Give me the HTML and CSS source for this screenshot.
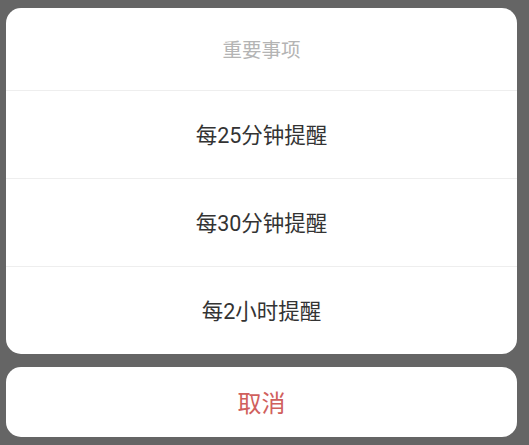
FILE: index.html
```html
<!DOCTYPE html>
<html lang="zh-CN">
<head>
    <meta charset="UTF-8">
    <meta name="viewport" content="width=device-width, initial-scale=1.0">
    <title>提醒</title>
    <link rel="stylesheet" href="styles.css">
</head>
<body>
    <div class="sheet">
        <div class="sheet-group">
            <div class="sheet-title">重要事项</div>
            <div class="sheet-item">每25分钟提醒</div>
            <div class="sheet-item">每30分钟提醒</div>
            <div class="sheet-item">每2小时提醒</div>
        </div>
        <div class="sheet-group">
            <div class="sheet-cancel">取消</div>
        </div>
    </div>
</body>
</html>
```

FILE: styles.css
```css
html, body {
    height: 100%;
}
body {
    margin: 0;
    background-color: #656565;
    font-family: Roboto, "Noto Sans CJK SC", sans-serif;
}
.sheet {
    display: flex;
    flex-direction: column;
    gap: 13px;
    padding: 8px 12px 8px 6px;
}
.sheet-group {
    background-color: #fff;
    border-radius: 15px;
    overflow: hidden;
}
.sheet-title {
    height: 82px;
    display: flex;
    align-items: center;
    justify-content: center;
    font-size: 19.5px;
    color: #b4b4b4;
    padding-bottom: 1px;
    box-sizing: border-box;
}
.sheet-item {
    height: 88px;
    display: flex;
    align-items: center;
    justify-content: center;
    font-size: 21.5px;
    color: #333;
    border-top: 1px solid #eeeeee;
    padding-bottom: 3px;
    box-sizing: border-box;
}
.sheet-cancel {
    height: 70px;
    display: flex;
    align-items: center;
    justify-content: center;
    font-size: 24px;
    color: #d0605d;
    padding-bottom: 2px;
    box-sizing: border-box;
}
```
